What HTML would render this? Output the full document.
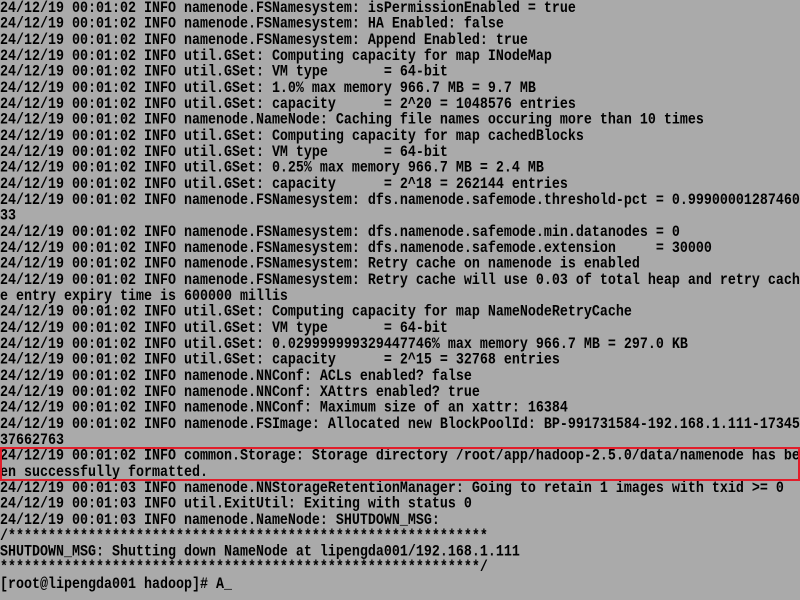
<!DOCTYPE html>
<html><head><meta charset="utf-8"><style>
html,body{margin:0;padding:0;background:#aaaaaa;width:800px;height:600px;overflow:hidden}
pre{position:absolute;left:0;top:1px;margin:0;font-family:"Liberation Mono",monospace;font-size:13.333px;line-height:13.333px;color:#000;font-weight:bold;white-space:pre;transform:scaleY(1.2);transform-origin:0 0}
.box{position:absolute;left:0;top:447px;width:796px;height:30px;border:2px solid #e21d2a}
</style></head><body>
<pre>24/12/19 00:01:02 INFO namenode.FSNamesystem: isPermissionEnabled = true
24/12/19 00:01:02 INFO namenode.FSNamesystem: HA Enabled: false
24/12/19 00:01:02 INFO namenode.FSNamesystem: Append Enabled: true
24/12/19 00:01:02 INFO util.GSet: Computing capacity for map INodeMap
24/12/19 00:01:02 INFO util.GSet: VM type       = 64-bit
24/12/19 00:01:02 INFO util.GSet: 1.0% max memory 966.7 MB = 9.7 MB
24/12/19 00:01:02 INFO util.GSet: capacity      = 2^20 = 1048576 entries
24/12/19 00:01:02 INFO namenode.NameNode: Caching file names occuring more than 10 times
24/12/19 00:01:02 INFO util.GSet: Computing capacity for map cachedBlocks
24/12/19 00:01:02 INFO util.GSet: VM type       = 64-bit
24/12/19 00:01:02 INFO util.GSet: 0.25% max memory 966.7 MB = 2.4 MB
24/12/19 00:01:02 INFO util.GSet: capacity      = 2^18 = 262144 entries
24/12/19 00:01:02 INFO namenode.FSNamesystem: dfs.namenode.safemode.threshold-pct = 0.99900001287460
33
24/12/19 00:01:02 INFO namenode.FSNamesystem: dfs.namenode.safemode.min.datanodes = 0
24/12/19 00:01:02 INFO namenode.FSNamesystem: dfs.namenode.safemode.extension     = 30000
24/12/19 00:01:02 INFO namenode.FSNamesystem: Retry cache on namenode is enabled
24/12/19 00:01:02 INFO namenode.FSNamesystem: Retry cache will use 0.03 of total heap and retry cach
e entry expiry time is 600000 millis
24/12/19 00:01:02 INFO util.GSet: Computing capacity for map NameNodeRetryCache
24/12/19 00:01:02 INFO util.GSet: VM type       = 64-bit
24/12/19 00:01:02 INFO util.GSet: 0.029999999329447746% max memory 966.7 MB = 297.0 KB
24/12/19 00:01:02 INFO util.GSet: capacity      = 2^15 = 32768 entries
24/12/19 00:01:02 INFO namenode.NNConf: ACLs enabled? false
24/12/19 00:01:02 INFO namenode.NNConf: XAttrs enabled? true
24/12/19 00:01:02 INFO namenode.NNConf: Maximum size of an xattr: 16384
24/12/19 00:01:02 INFO namenode.FSImage: Allocated new BlockPoolId: BP-991731584-192.168.1.111-17345
37662763
24/12/19 00:01:02 INFO common.Storage: Storage directory /root/app/hadoop-2.5.0/data/namenode has be
en successfully formatted.
24/12/19 00:01:03 INFO namenode.NNStorageRetentionManager: Going to retain 1 images with txid &gt;= 0
24/12/19 00:01:03 INFO util.ExitUtil: Exiting with status 0
24/12/19 00:01:03 INFO namenode.NameNode: SHUTDOWN_MSG:
/************************************************************
SHUTDOWN_MSG: Shutting down NameNode at lipengda001/192.168.1.111
************************************************************/
[root@lipengda001 hadoop]# A_</pre>
<div class="box"></div>
</body></html>
